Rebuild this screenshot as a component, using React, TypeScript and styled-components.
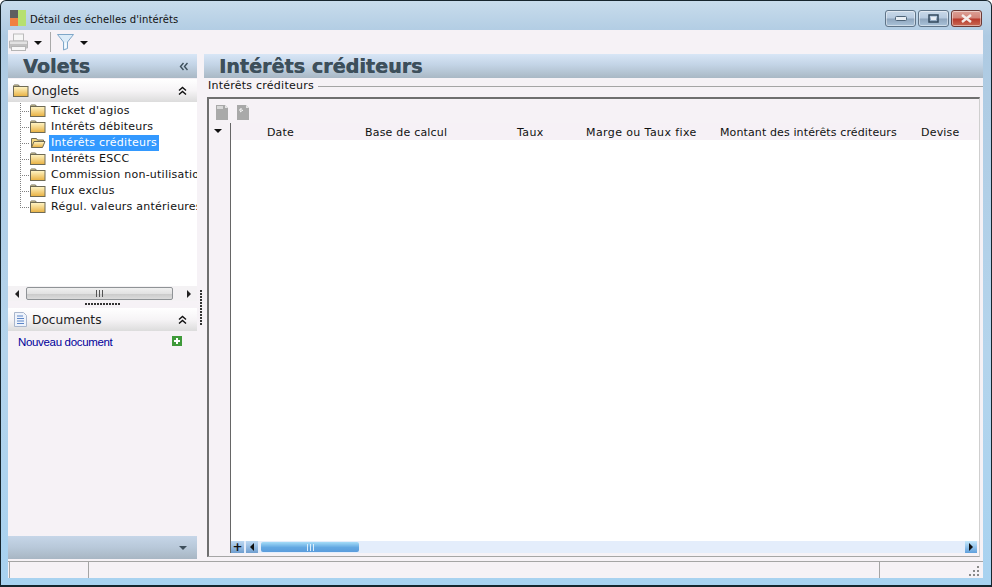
import React from "react";
import styled, { createGlobalStyle } from "styled-components";

const Global = createGlobalStyle`
  html, body { margin: 0; padding: 0; background: #fff; }
  * { box-sizing: border-box; }
`;

const Win = styled.div`
  width: 992px; height: 587px; display: flex; flex-direction: column;
  padding: 0 8px 7px 8px;
  border: 1px solid #16252d; border-bottom-width: 2px; border-radius: 6px 6px 0 0;
  background: linear-gradient(180deg, #c8dcec 0%, #aecae2 6%, #b4d4ec 60%, #a8d2f0 100%);
  font-family: "DejaVu Sans", sans-serif; color: #111; overflow: hidden;
`;
const TitleBar = styled.div`
  height: 29px; flex: none; display: flex; align-items: center; padding: 5px 0 0 1px; margin-right: 1px;
`;
const TitleText = styled.span`
  font-size: 10px; margin-left: 4px; flex: 1; letter-spacing: .1px; padding-top: 2px;
`;
const WinBtn = styled.div<{ $close?: boolean }>`
  width: 31px; height: 17px; margin-left: 2px; border: 1px solid ${p => (p.$close ? "#6b3a36" : "#5f7488")};
  border-radius: 3px; display: flex; align-items: center; justify-content: center;
  background: ${p => p.$close
    ? "linear-gradient(180deg,#dca096 0%,#d28478 48%,#b8392b 52%,#c86a55 100%)"
    : "linear-gradient(180deg,#c9d9e9 0%,#b6cadf 48%,#8ea5bd 52%,#aac3d9 100%)"};
  box-shadow: inset 0 0 0 1px rgba(255,255,255,.45);
`;
const Client = styled.div`
  flex: 1; display: flex; flex-direction: column; background: #f6f2f6; min-height: 0; margin-left: -1px;
`;
const Toolbar = styled.div`
  height: 24px; flex: none; display: flex; align-items: center; padding-left: 1px;
`;
const Caret = styled.span`
  width: 0; height: 0; border-left: 4px solid transparent; border-right: 4px solid transparent;
  border-top: 4px solid #111; margin: 2px 0 0 6px;
`;
const ToolSep = styled.span`
  width: 1px; height: 20px; background: #a9a9a9; margin: 0 6px 0 8px;
`;
const Main = styled.div`
  flex: 1; display: flex; min-height: 0;
`;
const Left = styled.div`
  width: 189px; flex: none; display: flex; flex-direction: column;
`;
const PaneTitle = styled.div`
  height: 24px; flex: none; display: flex; align-items: center; justify-content: space-between;
  background: linear-gradient(180deg,#d8e6f6 0%,#c3d4e6 45%,#a9b8c5 100%);
  font-weight: 700; font-size: 19px; color: #3d4f5b; white-space: nowrap; letter-spacing: .1px;
  text-shadow: .4px 0 0 #3d4f5b;
`;
const VoletsTitle = styled(PaneTitle)`
  padding: 0 9px 0 15px;
`;
const RightTitle = styled(PaneTitle)`
  padding-left: 15px;
`;
const SectionHead = styled.div`
  height: 23px; flex: none; margin-top: 1px; display: flex; align-items: center; padding: 0 10px 0 5px;
  background: linear-gradient(180deg,#ffffff 0%,#f6f4f6 50%,#dcdcdc 100%);
  font-size: 12.2px; color: #222;
`;
const IconSlot = styled.span`
  width: 18px; flex: none; display: flex; align-items: center;
`;
const SectionLabel = styled.span`
  flex: 1; margin-left: 1px;
`;
const Tree = styled.div`
  height: 184px; flex: none; background: #fff; overflow: hidden; padding: 1px 0 0 12px;
  display: flex; flex-direction: column;
`;
const TreeRow = styled.div`
  height: 16px; flex: none; display: flex; align-items: center; white-space: nowrap; font-size: 11px;
`;
const Connector = styled.span<{ $last?: boolean }>`
  width: 10px; flex: none; align-self: flex-start; height: ${p => (p.$last ? "9px" : "16px")};
  background-image: linear-gradient(180deg,#808080 50%,transparent 50%), linear-gradient(90deg,#808080 50%,transparent 50%);
  background-size: 1px 2px, 2px 1px;
  background-repeat: repeat-y, repeat-x;
  background-position: 0 0, 0 8px;
`;
const FolderBox = styled.span`
  flex: none; display: flex; width: 16px; margin-top: -1px;
`;
const TreeText = styled.span<{ $sel?: boolean }>`
  margin-left: 3px; padding: 0 2px; height: 16px; line-height: 16px; letter-spacing: .24px;
  background: ${p => (p.$sel ? "#3399ff" : "transparent")}; color: ${p => (p.$sel ? "#fff" : "#111")};
`;
const HScroll = styled.div`
  height: 15px; flex: none; display: flex; align-items: center; background: #f4f2f4; padding: 0 6px 0 7px;
`;
const HThumb = styled.div`
  width: 147px; height: 13px; margin: 0 14px 0 7px; border: 1px solid #8f9396; border-radius: 2px;
  background: linear-gradient(180deg,#f0f0f0 0%,#e2e2e2 50%,#c9c9c9 52%,#dcdcdc 100%);
  display: flex; align-items: center; justify-content: center;
`;
const Grip3 = styled.span<{ $c?: string }>`
  width: 7px; height: 7px;
  background: repeating-linear-gradient(90deg, ${p => p.$c || "#555"} 0 1px, transparent 1px 3px);
`;
const Arrow = styled.span<{ $dir: "l" | "r"; $c?: string }>`
  width: 0; height: 0; border-top: 4px solid transparent; border-bottom: 4px solid transparent;
  ${p => (p.$dir === "l" ? `border-right: 4px solid ${p.$c || "#222"};` : `border-left: 4px solid ${p.$c || "#222"};`)}
`;
const SplitH = styled.div`
  height: 6px; flex: none; display: flex; justify-content: center; align-items: flex-start; padding: 2px 0 0 0;
`;
const DotsH = styled.span`
  width: 35px; height: 2px;
  background: repeating-linear-gradient(90deg,#333 0 2px,transparent 2px 3px);
`;
const DocBody = styled.div`
  flex: 1; display: flex; align-items: flex-start; justify-content: space-between; padding: 4px 15px 0 10px;
  font-family: "Liberation Sans", sans-serif; font-size: 11.5px; letter-spacing: -.33px; color: #00009a; min-height: 0;
`;
const DocLink = styled.span`
  line-height: 14px;
`;
const PlusBox = styled.span`
  display: flex; margin-top: 1px;
`;
const BottomBar = styled.div`
  height: 23px; flex: none; display: flex; align-items: center; justify-content: flex-end; padding: 0 10px 0 0;
  background: linear-gradient(180deg,#c6d6e8 0%,#b8c8d9 50%,#a8b6c3 100%);
`;
const DownTri = styled.span`
  width: 0; height: 0; border-left: 4px solid transparent; border-right: 4px solid transparent;
  border-top: 4px solid #3e4f5c;
`;
const VSplit = styled.div`
  width: 7px; flex: none; display: flex; padding: 236px 0 0 3px;
`;
const DotsV = styled.span`
  width: 2px; height: 36px;
  background: repeating-linear-gradient(180deg,#333 0 2px,transparent 2px 3px);
`;
const Right = styled.div`
  flex: 1; min-width: 0; display: flex; flex-direction: column;
`;
const GroupLegend = styled.div`
  height: 19px; flex: none; display: flex; align-items: center; font-size: 11px; padding: 0 0 4px 4px; white-space: nowrap; letter-spacing: .24px;
`;
const LegendLine = styled.span`
  flex: 1; height: 1px; background: #a5a5a5; margin: 1px 0 0 4px;
`;
const GroupBox = styled.div`
  flex: 1; margin: 0 3px 2px 3px; min-height: 0;
  display: flex; flex-direction: column;
  border-top: 2px solid #6f6f6f; border-left: 2px solid #6f6f6f; border-bottom: 1px solid #a6a6a6; border-right: 1px solid #cfcfcf;
`;
const GridTools = styled.div`
  height: 24px; flex: none; display: flex; align-items: center; gap: 9px; padding: 3px 0 0 7px;
`;
const Grid = styled.div`
  flex: 1; display: flex; min-height: 0;
`;
const RowHead = styled.div`
  width: 22px; flex: none; border-right: 1px solid #666; padding: 6px 0 0 5px;
  margin-bottom: 3px;
`;
const MenuCaret = styled.span`
  display: block; width: 0; height: 0; border-left: 4px solid transparent; border-right: 4px solid transparent;
  border-top: 4px solid #111;
`;
const GridMain = styled.div`
  flex: 1; min-width: 0; display: flex; flex-direction: column; padding-right: 2px; padding-bottom: 3px;
`;
const HeadRow = styled.div`
  height: 17px; flex: none; display: flex; align-items: center; background: #f6f1f6; font-size: 11px; white-space: nowrap; overflow: hidden; padding-top: 1px;
`;
const Col = styled.span<{ $w: number; $ls: number }>`
  width: ${p => p.$w}px; flex: none; letter-spacing: ${p => p.$ls}px;
`;
const GridBody = styled.div`
  flex: 1; background: #fff; margin-right: -2px;
`;
const ScrollRow = styled.div`
  height: 12px; flex: none; display: flex; align-items: center; background: #e4edfb;
`;
const PlusBtn = styled.div`
  width: 13px; height: 12px; background: linear-gradient(180deg,#bcd8f2,#6f9ed0); display: flex; align-items: center; justify-content: center;
  font: 700 12px/12px "DejaVu Sans", sans-serif; color: #111;
`;
const ArrowBtn = styled.div`
  width: 12px; height: 12px; margin-left: 2px; background: linear-gradient(180deg,#bcd8f2,#6f9ed0); display: flex; align-items: center; justify-content: center;
`;
const BlueThumb = styled.div`
  width: 98px; height: 10px; margin-left: 3px; border-radius: 2px; background: linear-gradient(180deg,#a5dcf8 0%,#63a8e2 55%,#5b9cdc 100%);
  display: flex; align-items: center; justify-content: center;
`;
const Spacer = styled.div`
  flex: 1;
`;
const ArrowBtnEnd = styled(ArrowBtn)`
  background: linear-gradient(180deg,#c5e8fb,#5f9fdc); margin: 0;
`;
const Status = styled.div`
  height: 17px; flex: none; margin-top: 2px; border-top: 1px solid #a5a5a5; display: flex; font-size: 11px; position: relative; padding-left: 1px;
`;
const StatusCell = styled.div<{ $w?: number }>`
  ${p => (p.$w ? `width:${p.$w}px; flex:none;` : "flex:1;")} border-right: 1px solid #a5a5a5;
  &:first-child { border-left: 1px solid #a5a5a5; }
  &:last-of-type { border-right: none; }
`;
const ResizeGrip = styled.svg`
  position: absolute; right: 3px; bottom: 1px;
`;

const Folder = ({ open }: { open?: boolean }) => (
  <svg width="16" height="13" viewBox="0 0 16 13">
    <defs>
      <linearGradient id="fg" x1="0" y1="0" x2="0" y2="1">
        <stop offset="0" stopColor="#fff6c8" />
        <stop offset="1" stopColor="#e8b040" />
      </linearGradient>
    </defs>
    {open ? (
      <>
        <path d="M1.5 11.5V2.5h5l1 1.5h6v2" fill="#f3d77e" stroke="#6e6a55" />
        <path d="M1.5 11.5L4 5.5h11l-2.5 6z" fill="url(#fg)" stroke="#6e6a55" />
      </>
    ) : (
      <>
        <path d="M.5 2.5c0-1 .5-1.5 1-1.5h4l1 1.5" fill="#efe5b0" stroke="#6e6a55" />
        <rect x=".5" y="2.5" width="14.5" height="10" fill="url(#fg)" stroke="#6e6a55" />
      </>
    )}
  </svg>
);
const AppIcon = () => (
  <svg width="16" height="16" viewBox="0 0 16 16">
    <rect x="0" y="0" width="8" height="8" fill="#5f5f5f" />
    <rect x="0" y="8" width="8" height="8" fill="#f08040" />
    <rect x="8" y="0" width="8" height="16" fill="#b6e070" />
  </svg>
);
const Printer = () => (
  <svg width="19" height="18" viewBox="0 0 19 18">
    <rect x="4.5" y="1" width="10" height="7" fill="#f6f6f6" stroke="#bbb" />
    <path d="M.5 8h18v7H.5z" fill="#e2e2e2" stroke="#b5b5b5" />
    <rect x="1" y="11" width="17" height="4" fill="#c0c0c0" />
    <rect x="2.5" y="13.5" width="14" height="4" fill="#f7f7f7" stroke="#b5b5b5" />
  </svg>
);
const Funnel = () => (
  <svg width="17" height="18" viewBox="0 0 17 18">
    <path d="M.5 1.5h16L10.5 9v6.5l-4 1.5V9z" fill="#dcecf8" stroke="#7fa7c8" />
    <path d="M7.5 9.5v6l2-.8V9.5z" fill="#f6fbff" />
  </svg>
);
const DocIcon = () => (
  <svg width="14" height="15" viewBox="0 0 14 15">
    <path d="M1.5.5h9l3 3v11h-12z" fill="#eef3fb" stroke="#a9b6cc" />
    <path d="M4 4h6M4 6.5h7M4 9h7M4 11.5h7" stroke="#5d86c8" />
  </svg>
);
const PlusIcon = () => (
  <svg width="10" height="10" viewBox="0 0 10 10">
    <rect width="10" height="10" fill="#3f9a3a" />
    <path d="M5 2v6M2 5h6" stroke="#fff" strokeWidth="2" />
  </svg>
);
const DoubleChevron = ({ dir }: { dir: "up" | "left" }) => (
  <svg width="9" height="9" viewBox="0 0 9 9" fill="none" stroke={dir === "up" ? "#111" : "#3d4f5b"} strokeWidth="1.4">
    {dir === "up" ? (
      <path d="M1 4.5l3.5-3 3.5 3M1 8.5l3.5-3 3.5 3" />
    ) : (
      <path d="M4.5 1l-3 3.5 3 3.5M8.5 1l-3 3.5 3 3.5" />
    )}
  </svg>
);
const GrayDoc = ({ star }: { star?: boolean }) => (
  <svg width="12" height="15" viewBox="0 0 12 15">
    <path d="M0 0h9l3 3v12H0z" fill="#a9a9a9" />
    <path d="M9 0v3h3z" fill="#e6e6e6" />
    {star ? <path d="M3 7l3-2M2 5h2M4 3v2" stroke="#fff" /> : <path d="M1 1h6v3H1z" fill="#d8d8d8" />}
  </svg>
);

const items = [
  "Ticket d'agios",
  "Intérêts débiteurs",
  "Intérêts créditeurs",
  "Intérêts ESCC",
  "Commission non-utilisation",
  "Flux exclus",
  "Régul. valeurs antérieures",
];

const columns: [string, number, number][] = [
  ["", 36, 0],
  ["Date", 98, 0.12],
  ["Base de calcul", 152, 0.2],
  ["Taux", 69, 0.4],
  ["Marge ou Taux fixe", 134, 0.4],
  ["Montant des intérêts créditeurs", 201, 0.12],
  ["Devise", 50, 0.2],
];

export default function App() {
  return (
    <Win>
      <Global />
      <TitleBar>
        <AppIcon />
        <TitleText>Détail des échelles d'intérêts</TitleText>
        <WinBtn>
          <svg width="12" height="5" viewBox="0 0 12 5"><rect x=".5" y=".5" width="11" height="4" rx="1" fill="#e8eef4" stroke="#4e6478" /></svg>
        </WinBtn>
        <WinBtn>
          <svg width="11" height="9" viewBox="0 0 11 9"><rect x="1" y="1" width="9" height="7" fill="none" stroke="#32485c" strokeWidth="1.5" /><rect x="3" y="3" width="5" height="3" fill="#e8eef4" /></svg>
        </WinBtn>
        <WinBtn $close>
          <svg width="13" height="9" viewBox="0 0 13 9"><path d="M2 1l9 7M11 1L2 8" stroke="#f4ecea" strokeWidth="2.4" /></svg>
        </WinBtn>
      </TitleBar>
      <Client>
        <Toolbar>
          <Printer />
          <Caret />
          <ToolSep />
          <Funnel />
          <Caret />
        </Toolbar>
        <Main>
          <Left>
            <VoletsTitle>
              Volets
              <DoubleChevron dir="left" />
            </VoletsTitle>
            <SectionHead>
              <IconSlot><Folder /></IconSlot>
              <SectionLabel>Onglets</SectionLabel>
              <DoubleChevron dir="up" />
            </SectionHead>
            <Tree>
              {items.map((t, i) => (
                <TreeRow key={t}>
                  <Connector $last={i === items.length - 1} />
                  <FolderBox><Folder open={i === 2} /></FolderBox>
                  <TreeText $sel={i === 2}>{t}</TreeText>
                </TreeRow>
              ))}
            </Tree>
            <HScroll>
              <Arrow $dir="l" />
              <HThumb><Grip3 /></HThumb>
              <Arrow $dir="r" />
            </HScroll>
            <SplitH><DotsH /></SplitH>
            <SectionHead>
              <IconSlot><DocIcon /></IconSlot>
              <SectionLabel>Documents</SectionLabel>
              <DoubleChevron dir="up" />
            </SectionHead>
            <DocBody>
              <DocLink>Nouveau document</DocLink>
              <PlusBox><PlusIcon /></PlusBox>
            </DocBody>
            <BottomBar><DownTri /></BottomBar>
          </Left>
          <VSplit><DotsV /></VSplit>
          <Right>
            <RightTitle>Intérêts créditeurs</RightTitle>
            <GroupLegend>
              Intérêts créditeurs
              <LegendLine />
            </GroupLegend>
            <GroupBox>
              <GridTools>
                <GrayDoc />
                <GrayDoc star />
              </GridTools>
              <Grid>
                <RowHead><MenuCaret /></RowHead>
                <GridMain>
                  <HeadRow>
                    {columns.map(([t, w, ls], i) => <Col key={i} $w={w} $ls={ls}>{t}</Col>)}
                  </HeadRow>
                  <GridBody />
                  <ScrollRow>
                    <PlusBtn>+</PlusBtn>
                    <ArrowBtn><Arrow $dir="l" $c="#111" /></ArrowBtn>
                    <BlueThumb><Grip3 $c="#dbeefc" /></BlueThumb>
                    <Spacer />
                    <ArrowBtnEnd><Arrow $dir="r" $c="#111" /></ArrowBtnEnd>
                  </ScrollRow>
                </GridMain>
              </Grid>
            </GroupBox>
          </Right>
        </Main>
        <Status>
          <StatusCell $w={80} />
          <StatusCell />
          <StatusCell $w={103} />
          <ResizeGrip width="12" height="12" viewBox="0 0 12 12" fill="#8a8a8a">
            <rect x="9" y="1" width="2" height="2" /><rect x="5" y="5" width="2" height="2" /><rect x="9" y="5" width="2" height="2" />
            <rect x="1" y="9" width="2" height="2" /><rect x="5" y="9" width="2" height="2" /><rect x="9" y="9" width="2" height="2" />
          </ResizeGrip>
        </Status>
      </Client>
    </Win>
  );
}
